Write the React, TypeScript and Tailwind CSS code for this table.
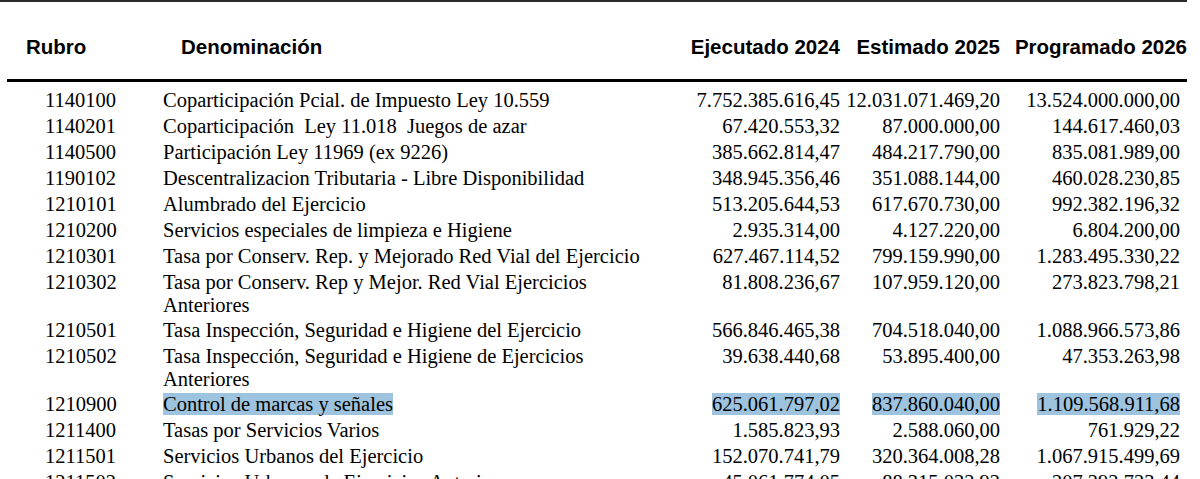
const HEAD = "font-['Liberation_Sans',Arial,sans-serif] font-bold text-[20.5px] text-black";
const COLS = "grid grid-cols-[156px_527px_150px_160px_187px]";

type Fila = {
  rubro: string;
  denom: string[];
  e24: string;
  e25: string;
  p26: string;
  marcada?: boolean;
};

const FILAS: Fila[] = [
  { rubro: "1140100", denom: ["Coparticipación Pcial. de Impuesto Ley 10.559"], e24: "7.752.385.616,45", e25: "12.031.071.469,20", p26: "13.524.000.000,00" },
  { rubro: "1140201", denom: ["Coparticipación\u00a0 Ley 11.018\u00a0 Juegos de azar"], e24: "67.420.553,32", e25: "87.000.000,00", p26: "144.617.460,03" },
  { rubro: "1140500", denom: ["Participación Ley 11969 (ex 9226)"], e24: "385.662.814,47", e25: "484.217.790,00", p26: "835.081.989,00" },
  { rubro: "1190102", denom: ["Descentralizacion Tributaria - Libre Disponibilidad"], e24: "348.945.356,46", e25: "351.088.144,00", p26: "460.028.230,85" },
  { rubro: "1210101", denom: ["Alumbrado del Ejercicio"], e24: "513.205.644,53", e25: "617.670.730,00", p26: "992.382.196,32" },
  { rubro: "1210200", denom: ["Servicios especiales de limpieza e Higiene"], e24: "2.935.314,00", e25: "4.127.220,00", p26: "6.804.200,00" },
  { rubro: "1210301", denom: ["Tasa por Conserv. Rep. y Mejorado Red Vial del Ejercicio"], e24: "627.467.114,52", e25: "799.159.990,00", p26: "1.283.495.330,22" },
  { rubro: "1210302", denom: ["Tasa por Conserv. Rep y Mejor. Red Vial Ejercicios", "Anteriores"], e24: "81.808.236,67", e25: "107.959.120,00", p26: "273.823.798,21" },
  { rubro: "1210501", denom: ["Tasa Inspección, Seguridad e Higiene del Ejercicio"], e24: "566.846.465,38", e25: "704.518.040,00", p26: "1.088.966.573,86" },
  { rubro: "1210502", denom: ["Tasa Inspección, Seguridad e Higiene de Ejercicios", "Anteriores"], e24: "39.638.440,68", e25: "53.895.400,00", p26: "47.353.263,98" },
  { rubro: "1210900", denom: ["Control de marcas y señales"], e24: "625.061.797,02", e25: "837.860.040,00", p26: "1.109.568.911,68", marcada: true },
  { rubro: "1211400", denom: ["Tasas por Servicios Varios"], e24: "1.585.823,93", e25: "2.588.060,00", p26: "761.929,22" },
  { rubro: "1211501", denom: ["Servicios Urbanos del Ejercicio"], e24: "152.070.741,79", e25: "320.364.008,28", p26: "1.067.915.499,69" },
  { rubro: "1211502", denom: ["Servicios Urbanos de Ejercicios Anteriores"], e24: "45.061.774,05", e25: "88.315.032,92", p26: "207.292.723,44" },
];

function Marca({ v, marcada }: { v: string; marcada?: boolean }) {
  return <span className={marcada ? "bg-[#9dc3de]" : ""}>{v}</span>;
}

export default function App() {
  return (
    <div className="w-[1200px] h-[479px] overflow-hidden bg-white">
      <div className="w-[1187px] border-t-2 border-[#2b2b2b]" />

      <div className="ml-[7px] w-[1180px]">
        {/* cabecera */}
        <div className={`${COLS} items-end h-[80px] pb-[16px] border-b-[3px] border-black ${HEAD}`}>
          <div className="pl-[19px]">Rubro</div>
          <div className="pl-[18px]">Denominación</div>
          <div className="text-right whitespace-nowrap">Ejecutado 2024</div>
          <div className="text-right whitespace-nowrap">Estimado 2025</div>
          <div className="text-right whitespace-nowrap">Programado 2026</div>
        </div>

        {/* filas: la 2ª línea de un texto largo va un poco más apretada */}
        <div className="pt-[5px] font-['Liberation_Serif','Times_New_Roman',serif] text-[20.5px] leading-[24px] text-black whitespace-nowrap">
          {FILAS.map((f) => (
            <div key={f.rubro} className={`${COLS} items-start py-[1px]`}>
              <div className="pl-[38px]">{f.rubro}</div>
              <div>
                {f.denom.map((l, i) => (
                  <div key={i} className={i > 0 ? "leading-[22px]" : ""}>
                    <Marca v={l} marcada={f.marcada} />
                  </div>
                ))}
              </div>
              <div className="text-right">
                <Marca v={f.e24} marcada={f.marcada} />
              </div>
              <div className="text-right">
                <Marca v={f.e25} marcada={f.marcada} />
              </div>
              <div className="text-right pr-[7px]">
                <Marca v={f.p26} marcada={f.marcada} />
              </div>
            </div>
          ))}
        </div>
      </div>
    </div>
  );
}
